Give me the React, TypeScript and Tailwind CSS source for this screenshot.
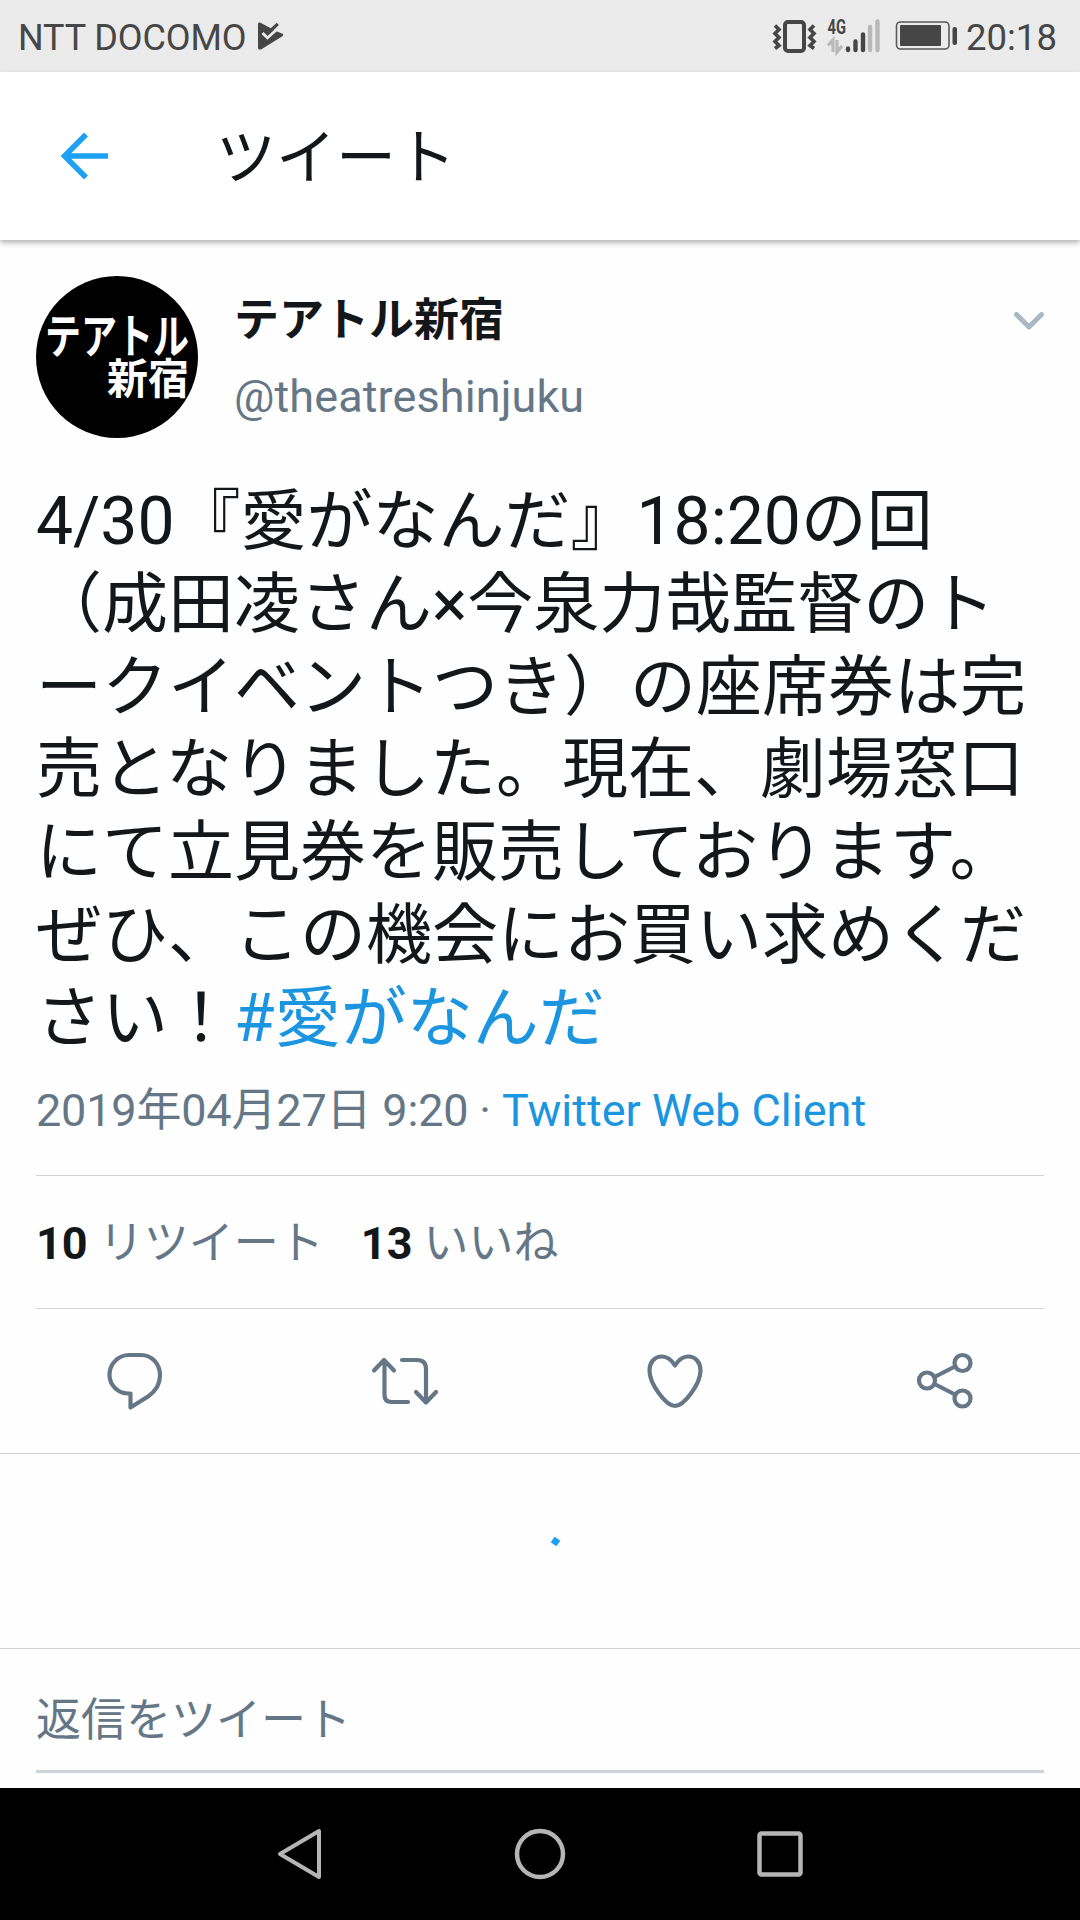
import type { ReactNode } from 'react'

const lines = [
  '4/30『愛がなんだ』18:20の回',
  '（成田凌さん×今泉力哉監督のト',
  'ークイベントつき）の座席券は完',
  '売となりました。現在、劇場窓口',
  'にて立見券を販売しております。',
  'ぜひ、この機会にお買い求めくだ',
]

function StatusBar() {
  return (
    <div className="flex h-[72px] shrink-0 items-center bg-[#ebebeb] pl-[18px] pr-6 text-[36px] leading-[72px] text-[#464646]">
      <span className="mt-[3px] w-[240px] whitespace-nowrap tracking-[-0.1px]">NTT DOCOMO</span>
      <svg className="h-7 w-[26px]" viewBox="0 0 26 28" fill="currentColor">
        <path d="M2 .5 18 9 25 12q1 1.500-1 2.500L3 27.500Q0 28 0 26V2Q0 0 2 .500Z" />
        <path d="m4.500 11 5 4.800L22 4.500" fill="none" stroke="#ebebeb" strokeWidth="3" />
        <path d="m12 4 7-3" fill="none" stroke="#ebebeb" strokeWidth="3" />
        <path d="m8.500 12.500L19.800 1.800" fill="none" stroke="currentColor" strokeWidth="3.200" />
        <path d="M3 2 13 7 9 12 5 8Z" />
      </svg>
      <svg className="ml-auto h-9 w-[186px] overflow-visible" viewBox="0 0 186 36" fill="none">
        {/* vibrate */}
        <g stroke="#464646">
          <rect x="14" y="4" width="19" height="29" rx="3" strokeWidth="4" />
          <path d="m4 7.500 4 4-4 4 4 4-4 4 4 4-4 3M43 7.500l-4 4 4 4-4 4 4 4-4 4 4 3" strokeWidth="3.600" />
        </g>
        {/* signal */}
        <text x="56.500" y="16" fill="#464646" fontFamily="Roboto" fontWeight="700" fontSize="21" textLength="18.500" lengthAdjust="spacingAndGlyphs">4G</text>
        <path d="M57 27.500 62 22v12M66 22v12l5-6" stroke="#b9b9b9" strokeWidth="3.200" />
        <g strokeWidth="4.400" strokeLinecap="round">
          <path d="M77 30.500v1.500M84.500 23.500v8.500M92 16.500v15.500" stroke="#464646" />
          <path d="M99 9v23M106.500 3.500v28.500" stroke="#b9b9b9" />
        </g>
        {/* battery */}
        <rect x="125.500" y="4" width="52.500" height="27" rx="4" stroke="#5a5a5a" strokeWidth="1.600" />
        <rect x="129" y="7" width="41" height="21" rx="1" fill="#464646" />
        <rect x="181.500" y="9" width="4.500" height="18" rx="2" fill="#464646" />
      </svg>
      <span className="ml-[9px] mt-[3px] w-[90px] whitespace-nowrap text-[36.500px]">20:18</span>
    </div>
  )
}

function Header() {
  return (
    <header className="relative flex h-[168px] shrink-0 items-center bg-white pl-[60px] shadow-[0_3px_5px_rgba(0,0,0,0.28)]">
      <svg className="h-12 w-12" viewBox="0 0 48 48" fill="none" stroke="#1da1f2" strokeWidth="5.500">
        <path d="M26 2.500 4.500 24 26 45.500M4 24h44" />
      </svg>
      <h1 className="ml-[108px] mt-[5px] text-[60px] leading-[72px]">ツイート</h1>
    </header>
  )
}

function Avatar() {
  return (
    <svg className="size-[162px] overflow-visible" viewBox="0 0 162 162" fill="#fff" fontWeight="700">
      <circle cx="81" cy="81" r="81" fill="#000" />
      <text x="9" y="76.500" fontSize="47" textLength="144" lengthAdjust="spacingAndGlyphs">テアトル</text>
      <text x="71" y="118" fontSize="42" textLength="82" lengthAdjust="spacingAndGlyphs">新宿</text>
    </svg>
  )
}

function Action({ children }: { children: ReactNode }) {
  return (
    <button className="flex flex-1 items-center justify-center">
      <svg className="h-[60px] w-[70px]" viewBox="0 0 70 60" fill="none" stroke="#657786" strokeWidth="4.200" strokeLinejoin="round" strokeLinecap="round">
        {children}
      </svg>
    </button>
  )
}

function Actions() {
  return (
    <div className="flex h-[145px] border-b border-[#d0d2d4] pb-[2px]">
      <Action>
        <path d="M29 5H41C52 5 60 14 60 25.500C60 35 56 41 48 46.500L30.500 57.500V43.500H28C18 43.500 9.500 35 9.500 25C9.500 14 18 5 29 5Z" />
      </Action>
      <Action>
        <path d="M4 20.500 14 10l10 10.500M14.500 11v34q0 7 7 7H38M32 10h15q9 0 9 9v33M46 42l10 10.500L66 42" />
      </Action>
      <Action>
        <path d="M35 15.500C31 9 27 6.500 22 6.500C14 6.500 9.500 13 9.500 20.500C9.500 34 26 56 35 56C44 56 60.500 34 60.500 20.500C60.500 13 56 6.500 48 6.500C43 6.500 39 9 35 15.500Z" />
      </Action>
      <Action>
        <circle cx="17" cy="30.500" r="8" />
        <circle cx="52.500" cy="13" r="8" />
        <circle cx="52.500" cy="48.500" r="8" />
        <path d="m24.500 27 20.500-10.500M24.500 34l20.500 10.500" />
      </Action>
    </div>
  )
}

function NavBar() {
  return (
    <nav className="flex h-[132px] shrink-0 items-center justify-center gap-[188px] bg-black">
      <svg className="size-[52px]" viewBox="0 0 52 52" fill="none" stroke="#b5b5b5" strokeWidth="4" strokeLinejoin="round">
        <path d="M6 26 45 3v46Z" />
      </svg>
      <svg className="size-[52px]" viewBox="0 0 52 52" fill="none" stroke="#b5b5b5" strokeWidth="4.500">
        <circle cx="26" cy="26" r="23" />
      </svg>
      <svg className="size-[52px]" viewBox="0 0 52 52" fill="none" stroke="#b5b5b5" strokeWidth="4.500">
        <rect x="5.500" y="5.500" width="41" height="41" rx="2" />
      </svg>
    </nav>
  )
}

export default function App() {
  return (
    <div lang="ja" className="flex h-[1920px] w-[1080px] flex-col overflow-hidden bg-[#fefefe] font-[Roboto,'Noto_Sans_CJK_JP',sans-serif] text-[#14171a]">
      <StatusBar />
      <Header />

      <article className="h-[935px] px-9 pt-9">
        <div className="flex h-[162px]">
          <Avatar />
          <div className="ml-9 flex-1 text-[45px]">
            <p className="mt-[11px] h-[68px] font-bold leading-[68px]">テアトル新宿</p>
            <p className="mt-[14px] leading-[56px] tracking-[0.100px] text-[#657786]">@theatreshinjuku</p>
          </div>
          <svg className="mt-[34px] h-6 w-8" viewBox="0 0 32 24" fill="none" stroke="#aab8c2" strokeWidth="5" strokeLinecap="round" strokeLinejoin="round">
            <path d="M4.500 4.500 17 17 29.500 4.500" />
          </svg>
        </div>

        <div className="mt-[43px] text-[66px] leading-[82.800px]">
          {lines.map(line => (
            <p key={line} className="whitespace-nowrap">{line}</p>
          ))}
          <p className="whitespace-nowrap">
            さい！<a className="text-[#1b95e0]">#愛がなんだ</a>
          </p>
        </div>

        <p className="mt-[22px] whitespace-nowrap text-[45px] leading-[56px] text-[#657786]">
          <span className="tracking-[-0.180px]">2019年04月27日 9:20 · </span>
          <a className="text-[#1b95e0]">Twitter Web Client</a>
        </p>
      </article>

      <div className="mx-9 flex h-[134px] items-center gap-[37px] border-y border-[#d0d2d4] pt-1 text-[45px] text-[#657786]">
        <span><b className="text-[#14171a]">10</b> リツイート</span>
        <span><b className="text-[#14171a]">13</b> いいね</span>
      </div>

      <Actions />

      {/* loading spinner, first frame */}
      <div className="flex h-[195px] items-center justify-center border-b border-[#d0d2d4] pb-[19px] pl-[30px]">
        <div className="size-[7px] rotate-[35deg] bg-[#1da1f2]" />
      </div>

      <div className="mx-9 mb-[15px] flex h-[124px] items-center border-b-[3px] border-[#ccd3d8] pt-[22px] text-[45px] text-[#657786]">
        返信をツイート
      </div>

      <NavBar />
    </div>
  )
}
